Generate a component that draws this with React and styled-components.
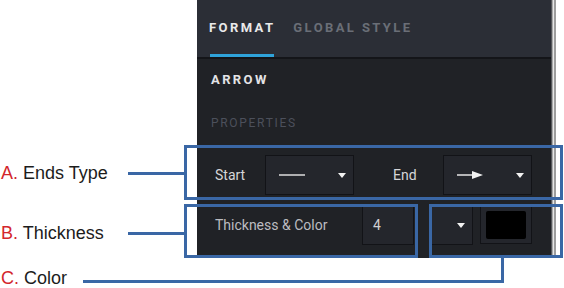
import { createGlobalStyle, styled } from "styled-components";

const GlobalStyle = createGlobalStyle`
  html, body {
    margin: 0;
    padding: 0;
    background: #ffffff;
  }
  body {
    font-family: "Liberation Sans", Arial, sans-serif;
  }
`;

const Page = styled.div`
  position: relative;
  width: 564px;
  height: 288px;
  overflow: hidden;
  background: #ffffff;
`;

const Top = styled.div`
  display: flex;
  height: 258px;
`;

const LeftColumn = styled.div`
  width: 197px;
  padding-top: 160px;
  box-sizing: border-box;
  display: flex;
  flex-direction: column;
  gap: 33px;
`;

const LabelRow = styled.div`
  display: flex;
  align-items: center;
  height: 27px;
`;

const LabelText = styled.div`
  width: ${(p) => p.$width || 128}px;
  padding-left: 1px;
  box-sizing: border-box;
  font-size: 18px;
  color: #1c1c1c;
  white-space: nowrap;
`;

const Letter = styled.span`
  color: #d3262c;
`;

const Leader = styled.div`
  width: 56px;
  height: 3px;
  background: #3a67a5;
`;

const Panel = styled.div`
  display: flex;
  width: 359px;
  height: 258px;
  font-family: Roboto, "Liberation Sans", sans-serif;
`;

const PanelMain = styled.div`
  width: 354px;
  background: #202226;
  display: flex;
  flex-direction: column;
`;

const Edge = styled.div`
  width: 5px;
  background: linear-gradient(
    to right,
    #55575b 0,
    #55575b 1px,
    #a9a9a9 1px,
    #a9a9a9 2px,
    #e6e6e6 2px,
    #e6e6e6 3px,
    #9d9d9d 3px
  );
`;

const Header = styled.div`
  height: 57px;
  background: #2b2e36;
  display: flex;
  gap: 18px;
  padding-left: 12px;
  border-bottom: 2px solid #141519;
`;

const Tab = styled.div`
  position: relative;
  display: flex;
  align-items: center;
  padding-bottom: 3px;
  font-size: 13px;
  font-weight: 700;
  letter-spacing: 2.4px;
  color: ${(p) => (p.$active ? "#e9e9ea" : "#6a6e77")};

  &::after {
    content: "";
    display: ${(p) => (p.$active ? "block" : "none")};
    position: absolute;
    left: 1px;
    right: 1px;
    bottom: 0;
    height: 3px;
    background: #2fa3da;
  }
`;

const SectionTitle = styled.div`
  height: 40px;
  display: flex;
  align-items: center;
  padding-left: 14px;
  font-size: 13px;
  font-weight: 700;
  letter-spacing: 2.4px;
  color: #e4e4e6;
`;

const SubTitle = styled.div`
  height: 48px;
  display: flex;
  align-items: center;
  padding-left: 14px;
  font-size: 12px;
  letter-spacing: 1.7px;
  color: #4c505b;
`;

const Rows = styled.div`
  display: flex;
  flex-direction: column;
  gap: 10px;
  padding-top: 8px;
`;

const Row = styled.div`
  display: flex;
  align-items: center;
  height: 40px;
  padding-left: 18px;
`;

const FieldLabel = styled.div`
  width: ${(p) => p.$width}px;
  margin-left: ${(p) => p.$offset || 0}px;
  font-size: 14px;
  color: ${(p) => p.$color || "#d6d6d8"};
  white-space: nowrap;
`;

const Box = styled.div`
  box-sizing: border-box;
  width: ${(p) => p.$width}px;
  height: 40px;
  margin-left: ${(p) => p.$offset || 0}px;
  background: #24262c;
  border: 1px solid #121317;
  display: flex;
  align-items: center;
  justify-content: space-between;
  padding: 0 7px 0 ${(p) => p.$padLeft || 13}px;
  font-size: 14px;
  color: #cfcfd2;
`;

const Caret = styled.span`
  margin-left: auto;
  width: 0;
  height: 0;
  border-left: 4px solid transparent;
  border-right: 4px solid transparent;
  border-top: 5px solid #f2f2f2;
`;

const Swatch = styled.div`
  box-sizing: border-box;
  width: 52px;
  height: 38px;
  margin-left: 7px;
  background: #24262c;
  border: 1px solid #121317;
  padding: 4px 5px;
  display: flex;
`;

const SwatchColor = styled.div`
  flex: 1;
  background: #000000;
  border-radius: 2px;
`;

const Bottom = styled.div`
  display: flex;
  align-items: flex-start;
  height: 30px;
`;

const ColorLabel = styled(LabelText)`
  padding-top: 12px;
  line-height: 17px;
`;

const Connector = styled.div`
  width: 421px;
  height: 25px;
  margin-left: -45px;
  box-sizing: border-box;
  border-right: 3px solid #3a67a5;
  border-bottom: 3px solid #3a67a5;
`;

const Callout = styled.div`
  position: absolute;
  left: ${(p) => p.$x}px;
  top: ${(p) => p.$y}px;
  width: ${(p) => p.$w}px;
  height: ${(p) => p.$h}px;
  box-sizing: border-box;
  border: 3px solid #3a67a5;
  pointer-events: none;
`;

const Dash = () => (
  <svg width="26" height="4" viewBox="0 0 26 4">
    <line x1="0" y1="2" x2="26" y2="2" stroke="#dcdcdc" strokeWidth="1.5" />
  </svg>
);

const ArrowEnd = () => (
  <svg width="26" height="10" viewBox="0 0 26 10">
    <line x1="0" y1="5" x2="17" y2="5" stroke="#e6e6e6" strokeWidth="1.5" />
    <polygon points="15,1 26,5 15,9" fill="#f2f2f2" />
  </svg>
);

export default function App() {
  return (
    <Page>
      <GlobalStyle />
      <Top>
        <LeftColumn>
          <LabelRow>
            <LabelText>
              <Letter>A.</Letter> Ends Type
            </LabelText>
            <Leader />
          </LabelRow>
          <LabelRow>
            <LabelText>
              <Letter>B.</Letter> Thickness
            </LabelText>
            <Leader />
          </LabelRow>
        </LeftColumn>
        <Panel>
          <PanelMain>
            <Header>
              <Tab $active>FORMAT</Tab>
              <Tab>GLOBAL STYLE</Tab>
            </Header>
            <SectionTitle>ARROW</SectionTitle>
            <SubTitle>PROPERTIES</SubTitle>
            <Rows>
              <Row>
                <FieldLabel $width={50}>Start</FieldLabel>
                <Box $width={89}>
                  <Dash />
                  <Caret />
                </Box>
                <FieldLabel $width={50} $offset={39}>
                  End
                </FieldLabel>
                <Box $width={89}>
                  <ArrowEnd />
                  <Caret />
                </Box>
              </Row>
              <Row>
                <FieldLabel $width={147} $color="#bcbcc0">
                  Thickness &amp; Color
                </FieldLabel>
                <Box $width={52} $padLeft={10}>
                  4
                </Box>
                <Box $width={43} $offset={16}>
                  <Caret />
                </Box>
                <Swatch>
                  <SwatchColor />
                </Swatch>
              </Row>
            </Rows>
          </PanelMain>
          <Edge />
        </Panel>
      </Top>
      <Bottom>
        <ColorLabel $width={128}>
          <Letter>C.</Letter> Color
        </ColorLabel>
        <Connector />
      </Bottom>
      <Callout $x={184} $y={145} $w={379} $h={55} />
      <Callout $x={184} $y={204} $w={234} $h={54} />
      <Callout $x={429} $y={204} $w={134} $h={54} />
    </Page>
  );
}
